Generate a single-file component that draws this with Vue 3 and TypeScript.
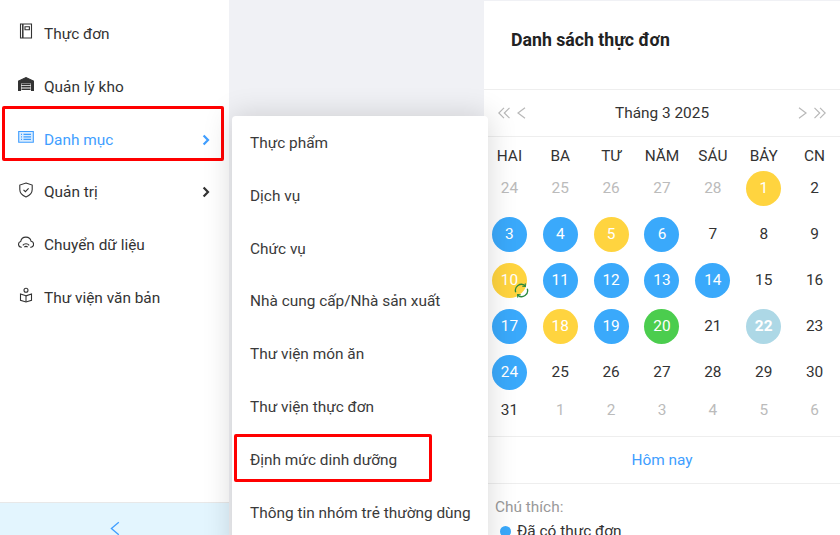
<script setup lang="ts">
type Status = 'menu' | 'pending' | 'done' | 'today' | undefined

interface Day {
  label: number
  muted?: boolean
  status?: Status
  synced?: boolean
}

const menuItems = [
  { key: 'book', label: 'Thực đơn' },
  { key: 'store', label: 'Quản lý kho' },
  { key: 'list', label: 'Danh mục', arrow: true, active: true },
  { key: 'shield', label: 'Quản trị', arrow: true },
  { key: 'cloud', label: 'Chuyển dữ liệu' },
  { key: 'library', label: 'Thư viện văn bản' },
]

const subItems = [
  'Thực phẩm',
  'Dịch vụ',
  'Chức vụ',
  'Nhà cung cấp/Nhà sản xuất',
  'Thư viện món ăn',
  'Thư viện thực đơn',
  'Định mức dinh dưỡng',
  'Thông tin nhóm trẻ thường dùng',
]

const weekdays = ['HAI', 'BA', 'TƯ', 'NĂM', 'SÁU', 'BẢY', 'CN']

const statusByDay: Record<number, Status> = {
  1: 'pending',
  3: 'menu',
  4: 'menu',
  5: 'pending',
  6: 'menu',
  10: 'pending',
  11: 'menu',
  12: 'menu',
  13: 'menu',
  14: 'menu',
  17: 'menu',
  18: 'pending',
  19: 'menu',
  20: 'done',
  22: 'today',
  24: 'menu',
}

const days: Day[] = [
  ...[24, 25, 26, 27, 28].map((label) => ({ label, muted: true })),
  ...Array.from({ length: 31 }, (_, i) => ({
    label: i + 1,
    status: statusByDay[i + 1],
    synced: i + 1 === 10,
  })),
  ...[1, 2, 3, 4, 5, 6].map((label) => ({ label, muted: true })),
]
</script>

<template>
  <div class="page">
    <aside class="sidebar">
      <nav class="sidebar__menu">
        <a
          v-for="item in menuItems"
          :key="item.key"
          class="menu-item"
          :class="{ 'menu-item--active': item.active }"
        >
          <svg class="menu-item__icon" viewBox="0 0 16 16" fill="none" stroke="currentColor" stroke-width="1.1">
            <template v-if="item.key === 'book'">
              <path d="M2.500 1h11v14h-11z" />
              <path d="M4.800 1v14" stroke-width="1.500" />
              <path d="M7 3.800h4.400v3H7z" />
            </template>
            <template v-else-if="item.key === 'store'">
              <path d="M0.500 14.500V5L8 1.500 15.500 5v9.500h-2V7h-11v7.500z" fill="currentColor" />
              <path d="M3.500 8.500h9M3.500 10.800h9M3.500 13.200h9" stroke-width="1.400" />
            </template>
            <template v-else-if="item.key === 'list'">
              <path d="M0.700 2.500h14.600v10.800H0.700z" fill="#d9ecff" />
              <path d="M3 5.300h1M3 7.800h1M3 10.300h1M5.500 5.300h7.500M5.500 7.800h7.500M5.500 10.300h7.500" stroke-width="1.200" />
            </template>
            <template v-else-if="item.key === 'shield'">
              <path d="M8 1l6.200 2.100v4.400c0 3.400-2.600 6-6.200 7.400-3.600-1.400-6.200-4-6.200-7.400V3.100z" />
              <path d="M5.500 7.800l1.900 1.900 3.200-3.400" />
            </template>
            <template v-else-if="item.key === 'cloud'">
              <path d="M3.800 12.200h-.5A2.900 2.900 0 0 1 2.700 6.500a5.300 5.300 0 0 1 10.400-.2 3 3 0 0 1 .1 5.900h-1" />
              <path d="M4.800 10.400a4 4 0 0 1 6.400 0M6.400 12.200a2 2 0 0 1 3.200 0" />
            </template>
            <template v-else>
              <circle cx="8" cy="3.200" r="2" />
              <path d="M8 8.800 2.500 7v6.300L8 15l5.500-1.700V7z" />
              <path d="M8 8.800V15" />
            </template>
          </svg>
          <span class="menu-item__label">{{ item.label }}</span>
          <svg v-if="item.arrow" class="menu-item__arrow" viewBox="0 0 8 12" fill="none" stroke="currentColor" stroke-width="2.200">
            <path d="M1.600 1.400 6 6l-4.400 4.600" />
          </svg>
          <span v-if="item.active" class="mark mark--menu" />
        </a>
      </nav>
      <footer class="sidebar__footer">
        <svg class="sidebar__collapse" viewBox="0 0 10 16" fill="none" stroke="currentColor" stroke-width="1.300">
          <path d="M8.800 1.200 1.400 7.500l7.400 6.300" />
        </svg>
      </footer>
    </aside>

    <main class="content" />

    <section class="panel">
      <header class="panel__header">
        <h1 class="panel__title">Danh sách thực đơn</h1>
      </header>

      <div class="calendar-nav">
        <span class="calendar-nav__group">
          <svg class="calendar-nav__double" viewBox="0 0 13 12" fill="none" stroke="currentColor" stroke-width="1.200">
            <path d="M6 .8.800 6 6 11.200M11.500.8 6.300 6l5.200 5.200" />
          </svg>
          <svg class="calendar-nav__single" viewBox="0 0 9 12" fill="none" stroke="currentColor" stroke-width="1.200">
            <path d="M8 .8 1 6l7 5.200" />
          </svg>
        </span>
        <span class="calendar-nav__month">Tháng 3 2025</span>
        <span class="calendar-nav__group">
          <svg class="calendar-nav__single" viewBox="0 0 9 12" fill="none" stroke="currentColor" stroke-width="1.200">
            <path d="M1 .8 8 6l-7 5.200" />
          </svg>
          <svg class="calendar-nav__double" viewBox="0 0 13 12" fill="none" stroke="currentColor" stroke-width="1.200">
            <path d="M1.500.8 6.700 6l-5.200 5.200M7 .8 12.200 6 7 11.200" />
          </svg>
        </span>
      </div>

      <div class="calendar">
        <div class="calendar__week">
          <span v-for="name in weekdays" :key="name">{{ name }}</span>
        </div>
        <div class="calendar__days">
          <div v-for="(day, index) in days" :key="index" class="day">
            <span
              class="day__num"
              :class="[day.status ? `day__num--${day.status}` : '', { 'day__num--muted': day.muted }]"
            >
              {{ day.label }}
              <svg v-if="day.synced" class="day__sync" viewBox="0 0 16 16" fill="none" stroke="#2b8a3e" stroke-width="1.400">
                <path d="M1.800 9.800A6.400 6.400 0 0 1 11.800 2.800" />
                <path d="M14.200 6.200A6.400 6.400 0 0 1 4.200 13.200" />
                <path d="M8.800 3.400l3.400.2-.2-3.200" stroke-width="1.100" />
                <path d="M7.200 12.600l-3.400-.2.2 3.200" stroke-width="1.100" />
              </svg>
            </span>
          </div>
        </div>
      </div>

      <div class="today">Hôm nay</div>

      <div class="legend">
        <div class="legend__title">Chú thích:</div>
        <div class="legend__row"><i class="legend__dot" />Đã có thực đơn</div>
      </div>
    </section>

    <div class="submenu">
      <a
        v-for="(label, index) in subItems"
        :key="label"
        class="submenu__item"
      >
        {{ label }}
        <span v-if="index === 6" class="mark mark--sub" />
      </a>
    </div>
  </div>
</template>

<style>
html,
body {
  margin: 0;
  background: #fff;
}
</style>

<style scoped>
.page {
  position: relative;
  display: flex;
  width: 840px;
  height: 535px;
  overflow: hidden;
  font-family: Roboto, "Noto Sans", sans-serif;
  color: #333;
  background: #f0f1f5;
}

.sidebar {
  display: flex;
  flex-direction: column;
  width: 229px;
  flex-shrink: 0;
  background: #fff;
}

.sidebar__menu {
  flex: 1;
  padding-top: 7.6px;
}

.menu-item {
  position: relative;
  display: flex;
  align-items: center;
  height: 52.8px;
  padding: 0 18px;
  font-size: 15.4px;
  color: #333;
}

.menu-item--active {
  color: #409eff;
}

.menu-item__icon {
  width: 16px;
  height: 16px;
  margin-top: -5px;
  margin-right: 10px;
  flex-shrink: 0;
}

.menu-item__label {
  flex: 1;
}

.menu-item__arrow {
  width: 8px;
  height: 12px;
  margin-right: 1px;
  color: #333;
}

.menu-item--active .menu-item__arrow {
  color: #409eff;
}

.mark {
  position: absolute;
  box-sizing: border-box;
  border: 3px solid #f00;
  border-radius: 2px;
}

.mark--menu {
  top: -7.2px;
  left: 2px;
  width: 222px;
  height: 55px;
}

.mark--sub {
  top: 0.5px;
  left: 2px;
  width: 198px;
  height: 48px;
}

.sidebar__footer {
  display: flex;
  justify-content: center;
  height: 33px;
  flex-shrink: 0;
  box-sizing: border-box;
  border-top: 1px solid #e8e8e8;
  background: #e3f5fe;
}

.sidebar__collapse {
  width: 10px;
  height: 16px;
  margin-top: 18px;
  color: #409eff;
}

.content {
  flex: 1;
}

.panel {
  display: flex;
  flex-direction: column;
  width: 356px;
  flex-shrink: 0;
  margin-top: 1px;
  background: #fff;
}

.panel > * {
  flex-shrink: 0;
}

.panel__header {
  display: flex;
  align-items: center;
  height: 89px;
  padding: 0 27px 10px;
  box-sizing: border-box;
  border-bottom: 1px solid #eee;
}

.panel__title {
  margin: 0;
  font-size: 17.7px;
  font-weight: 700;
  color: #222;
}

.calendar-nav {
  display: flex;
  align-items: center;
  justify-content: space-between;
  height: 47px;
  box-sizing: border-box;
  padding: 0 14px;
  border-bottom: 1px solid #eee;
  color: #b8b8b8;
}

.calendar-nav__group {
  display: flex;
  align-items: center;
  gap: 6px;
}

.calendar-nav__double {
  width: 13px;
  height: 12px;
}

.calendar-nav__single {
  width: 9px;
  height: 12px;
}

.calendar-nav__month {
  font-size: 15.4px;
  color: #333;
}

.calendar__week {
  display: grid;
  grid-template-columns: repeat(7, 1fr);
  height: 36px;
  padding-top: 1px;
  box-sizing: border-box;
  align-items: center;
  justify-items: center;
  font-size: 15.4px;
  color: #333;
}

.calendar__days {
  display: grid;
  grid-template-columns: repeat(7, 1fr);
  grid-template-rows: repeat(5, 46px) 30px;
  height: 256px;
  margin-top: -8px;
}

.day {
  display: flex;
  align-items: center;
  justify-content: center;
}

.day__num {
  position: relative;
  display: flex;
  align-items: center;
  justify-content: center;
  width: 35px;
  height: 35px;
  border-radius: 50%;
  font-size: 15.4px;
  color: #333;
}

.day__num--muted {
  color: #bbb;
}

.day__num--menu,
.day__num--pending,
.day__num--done,
.day__num--today {
  color: #fff;
}

.day__num--menu {
  background: #3aa9fb;
}

.day__num--pending {
  background: #ffd43f;
}

.day__num--done {
  background: #4bcd4e;
}

.day__num--today {
  background: #add8e6;
  font-weight: 700;
}

.day__sync {
  position: absolute;
  right: -2px;
  bottom: 0;
  width: 15px;
  height: 15px;
}

.today {
  display: flex;
  align-items: center;
  justify-content: center;
  height: 48px;
  box-sizing: border-box;
  margin-top: 15px;
  border-top: 1px solid #eee;
  border-bottom: 1px solid #eee;
  font-size: 15.4px;
  color: #409eff;
}

.legend {
  padding: 14px 11px 0;
  font-size: 15.4px;
}

.legend__title {
  color: #999;
}

.legend__row {
  display: flex;
  align-items: center;
  margin-top: 6px;
  padding-left: 5px;
  color: #333;
}

.legend__dot {
  width: 11px;
  height: 11px;
  margin-right: 6px;
  border-radius: 50%;
  background: #3aa9fb;
}

.submenu {
  position: absolute;
  top: 116px;
  left: 232px;
  width: 256px;
  height: 440px;
  padding-top: 0.7px;
  border-radius: 4px;
  background: #fff;
  box-shadow: 0 0 30px rgba(0, 0, 0, 0.16);
}

.submenu__item {
  position: relative;
  display: flex;
  align-items: center;
  height: 52.8px;
  padding-left: 18px;
  font-size: 15.4px;
  color: #3a3a3a;
}
</style>
